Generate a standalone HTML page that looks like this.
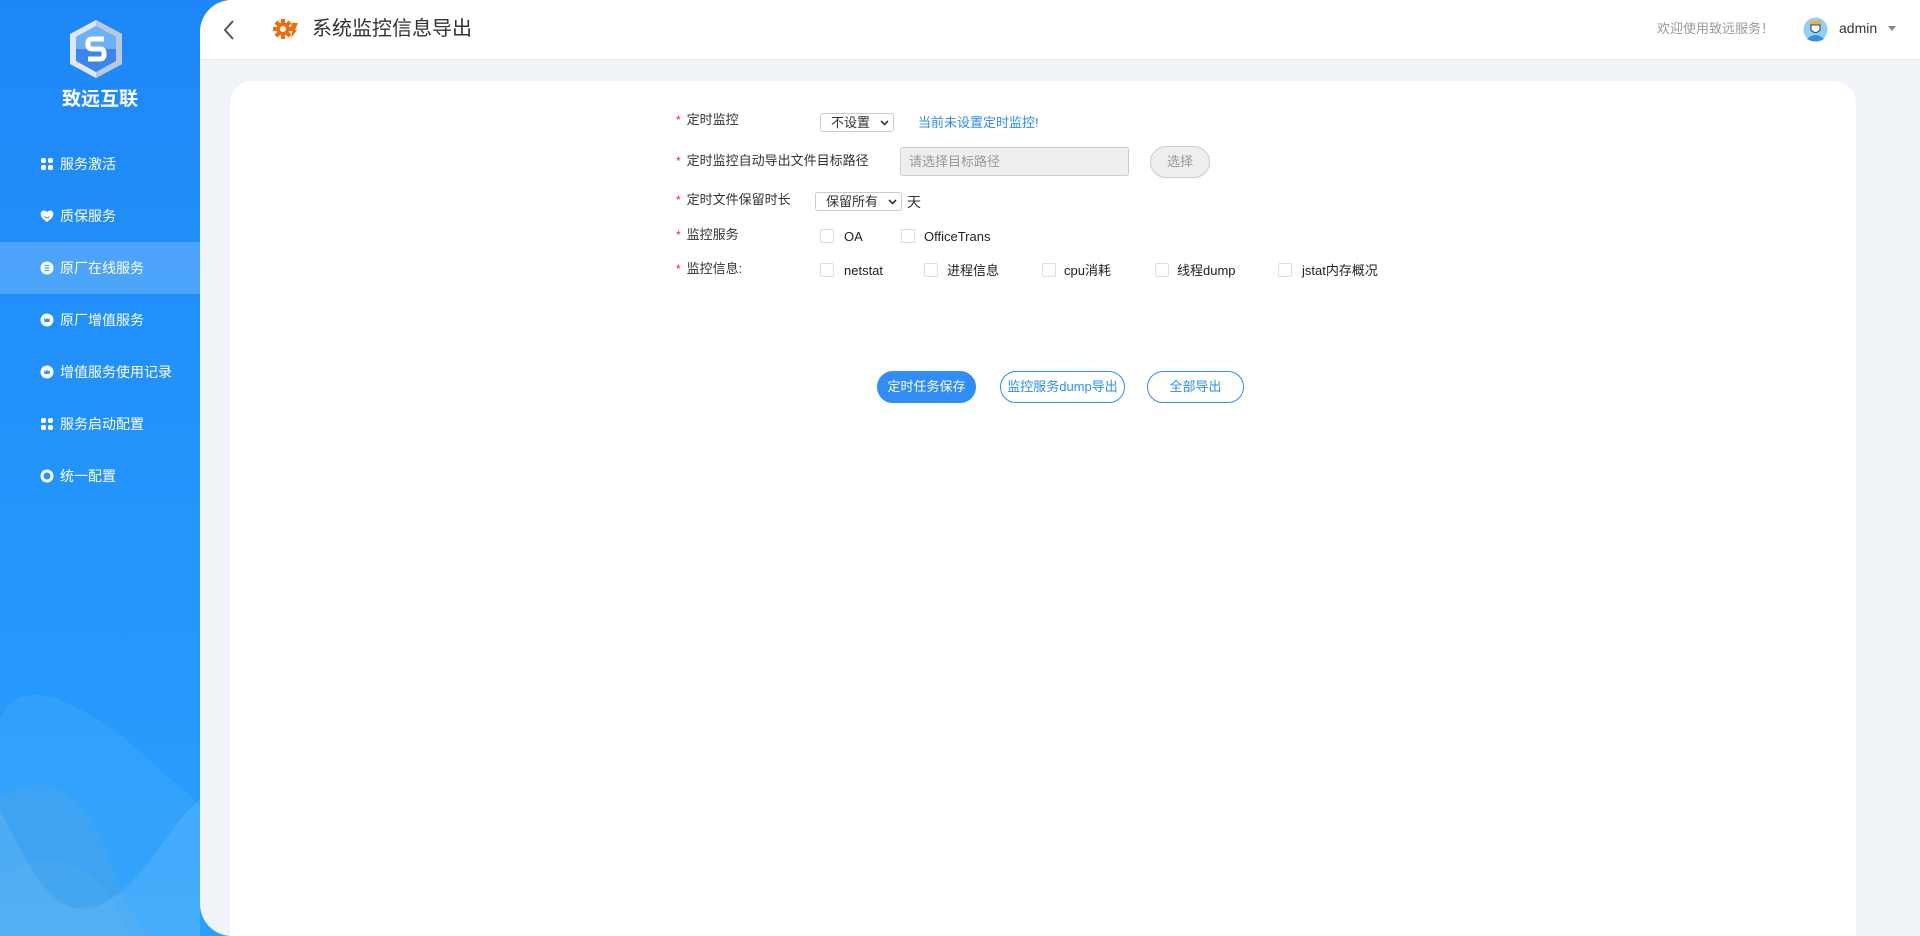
<!DOCTYPE html>
<html><head><meta charset="utf-8">
<style>
*{margin:0;padding:0;box-sizing:border-box}
body{width:1920px;height:936px;overflow:hidden;font-family:"Liberation Sans","Noto Sans CJK SC",sans-serif;background:linear-gradient(180deg,#1e87f7 0%,#2599fc 70%,#2aa0fb 100%);position:relative;color:#333}
.side{position:absolute;left:0;top:0;width:200px;height:936px}
.logo{position:absolute;left:66px;top:18px}
.brand{position:absolute;left:0;width:200px;top:84px;text-align:center;color:#fff;font-size:19px;font-weight:bold}
.item{position:absolute;left:0;width:200px;height:52px;line-height:52px;color:#fff;font-size:14px;padding-left:60px}
.item.active{background:rgba(255,255,255,0.2)}
.ic{position:absolute;left:40px;top:19px;width:14px;height:14px}
.main{position:absolute;left:200px;top:0;width:1720px;height:936px;background:#f0f3f7;border-radius:32px 0 0 32px;overflow:hidden}
.head{position:absolute;left:0;top:0;width:1720px;height:60px;background:#fff;border-bottom:1px solid #e6e9ee}
.card{position:absolute;left:30px;top:81px;width:1626px;height:880px;background:#fff;border-radius:22px}
.abs{position:absolute;white-space:nowrap;line-height:18px}
.lbl{font-size:13px;color:#333}
.lbl b{color:#f5222d;font-weight:normal;font-size:12px;margin-right:6px}
.sel{position:absolute;border:1px solid #ccc;border-radius:3px;font-size:13px;color:#333;background:#fff;padding-left:10px;line-height:17px}
.sel svg{position:absolute;right:4px;top:6px}
.cb{position:absolute;width:14px;height:14px;border:1px solid #dcdfe6;border-radius:2px;background:#fff}
.t{font-size:13px;color:#222}
.btn{position:absolute;height:32px;line-height:30px;border-radius:16px;font-size:13px;text-align:center;border:1px solid #2f8df5;color:#2f8df5;background:#fff}
</style></head><body>
<div class="side">
<svg class="logo" width="60" height="62" viewBox="0 0 60 62">
<polygon points="30,2 56,16 56,46 30,60 4,46 4,16" fill="#dfe7f2"/>
<polygon points="30,2 56,16 56,46 30,60" fill="#b9c8dc"/>
<polygon points="30,8 50,19 50,43 30,54 10,43 10,19" fill="#3a86ec"/>
<polygon points="30,8 50,19 50,31 10,31 10,19" fill="#6cb0f7"/>
<path d="M38,21 H26 Q22,21 22,25 V27 Q22,31 26,31 H34 Q38,31 38,35 V37 Q38,41 34,41 H22" stroke="#fff" stroke-width="5" fill="none"/>
</svg>
<div class="brand">致远互联</div>
<div class="item" style="top:138px"><svg class="ic" viewBox="0 0 14 14"><rect x="1" y="1" width="5" height="5" rx="2" fill="#fff"/><rect x="8" y="1" width="5" height="5" rx="2" fill="#fff"/><rect x="1" y="8" width="5" height="5" rx="2" fill="#fff"/><rect x="8" y="8" width="5" height="5" rx="2" fill="#fff"/></svg>服务激活</div>
<div class="item" style="top:190px"><svg class="ic" viewBox="0 0 14 14"><path d="M7,13 C1,9 0,6 1,3.5 C2,1 5,1 7,3 C9,1 12,1 13,3.5 C14,6 13,9 7,13Z" fill="#fff"/><path d="M4.5,7.5 q2.5,2.5 5,0" stroke="#2a93f8" stroke-width="1" fill="none"/></svg>质保服务</div>
<div class="item active" style="top:242px"><svg class="ic" viewBox="0 0 14 14"><circle cx="7" cy="7" r="6.5" fill="#fff"/><path d="M4.5,4.5h5M4.5,7h5M4.5,9.5h5" stroke="#4aa2f7" stroke-width="1.2"/></svg>原厂在线服务</div>
<div class="item" style="top:294px"><svg class="ic" viewBox="0 0 14 14"><circle cx="7" cy="7" r="6.5" fill="#fff"/><path d="M4.5,9h5l0.5,-4l-2,1.5l-1,-2l-1,2l-2,-1.5z" fill="#2a93f8"/></svg>原厂增值服务</div>
<div class="item" style="top:346px"><svg class="ic" viewBox="0 0 14 14"><circle cx="7" cy="7" r="6.5" fill="#fff"/><path d="M4.5,9h5l0.5,-4l-2,1.5l-1,-2l-1,2l-2,-1.5z" fill="#2a93f8"/></svg>增值服务使用记录</div>
<div class="item" style="top:398px"><svg class="ic" viewBox="0 0 14 14"><rect x="1" y="1" width="5" height="5" rx="2" fill="#fff"/><rect x="8" y="1" width="5" height="5" rx="2" fill="#fff"/><rect x="1" y="8" width="5" height="5" rx="2" fill="#fff"/><rect x="8" y="8" width="5" height="5" rx="2" fill="#fff"/></svg>服务启动配置</div>
<div class="item" style="top:450px"><svg class="ic" viewBox="0 0 14 14"><circle cx="7" cy="7" r="5" fill="none" stroke="#fff" stroke-width="3"/></svg>统一配置</div>
<svg style="position:absolute;left:0;top:680px" width="200" height="256" viewBox="0 0 200 256">
<path d="M0,40 C20,-10 80,20 150,80 C180,110 200,120 200,130 V256 H0Z" fill="#fff" opacity="0.05"/>
<path d="M0,120 C40,90 80,100 110,180 C130,240 150,256 150,256 H0Z" fill="#7ac" opacity="0.18"/>
<path d="M200,120 C170,140 150,200 100,225 C60,240 40,210 0,130 V256 H200Z" fill="#8cf" opacity="0.22"/>
<path d="M0,200 C50,160 100,180 130,256 H0Z" fill="#6bd" opacity="0.15"/>
</svg>
</div>
<div class="main">
<div class="head">
<svg class="abs" style="left:22px;top:19px" width="14" height="22" viewBox="0 0 14 22"><path d="M11,2 L3,11 L11,20" stroke="#555" stroke-width="2" fill="none"/></svg>
<svg class="abs" style="left:73px;top:18px" width="26" height="22" viewBox="0 0 26 22"><g fill="#f26b0c"><circle cx="10" cy="11" r="6.5"/><rect x="8" y="1" width="4" height="20"/><rect x="0" y="9" width="20" height="4"/><rect x="8" y="1" width="4" height="20" transform="rotate(45 10 11)"/><rect x="8" y="1" width="4" height="20" transform="rotate(-45 10 11)"/></g><circle cx="10" cy="11" r="3" fill="#fff"/><path d="M19,5 L25,5 L22,12 L24,12 L18,20 L19.5,13 L17,13Z" fill="#f26b0c"/></svg>
<div class="abs" style="left:112px;top:17px;font-size:20px;line-height:24px;color:#333">系统监控信息导出</div>
<div class="abs" style="left:1457px;top:20px;font-size:13px;color:#999">欢迎使用致远服务！</div>
<svg class="abs" style="left:1603px;top:17px" width="25" height="25" viewBox="0 0 25 25"><circle cx="12.5" cy="12.5" r="12" fill="#8fd0f6"/><rect x="7" y="4" width="11" height="4" fill="#f5b031"/><path d="M8,8 h9 v5 q-4.5,5 -9,0z" fill="#fff" stroke="#22456b" stroke-width="1"/><path d="M4,22 q8.5,-8 17,0 q-8.5,5 -17,0z" fill="#3b8de0"/></svg>
<div class="abs" style="left:1639px;top:19px;font-size:14px;color:#333">admin</div>
<div class="abs" style="left:1688px;top:26px;width:0;height:0;border-left:4px solid transparent;border-right:4px solid transparent;border-top:5px solid #888"></div>
</div>
<div class="card">
<div style="position:absolute;left:-230px;top:-81px">
<div class="abs lbl" style="left:676px;top:111px"><b>*</b>定时监控</div>
<div class="sel" style="left:820px;top:113px;width:74px;height:19px">不设置<svg width="9" height="6" viewBox="0 0 9 6"><path d="M1,1 L4.5,4.5 L8,1" stroke="#333" stroke-width="1.6" fill="none"/></svg></div>
<div class="abs" style="left:918px;top:114px;font-size:13px;color:#2f8df5">当前未设置定时监控!</div>
<div class="abs lbl" style="left:676px;top:152px"><b>*</b>定时监控自动导出文件目标路径</div>
<div class="abs" style="left:900px;top:147px;width:229px;height:29px;background:#eee;border:1px solid #ccc;border-radius:3px;font-size:13px;color:#999;padding:5px 0 0 8px">请选择目标路径</div>
<div class="abs" style="left:1150px;top:146px;width:60px;height:32px;border:1px solid #ccc;border-radius:16px;background:#eee;font-size:13px;color:#999;text-align:center;line-height:30px">选择</div>
<div class="abs lbl" style="left:676px;top:191px"><b>*</b>定时文件保留时长</div>
<div class="sel" style="left:815px;top:192px;width:87px;height:19px">保留所有<svg width="9" height="6" viewBox="0 0 9 6"><path d="M1,1 L4.5,4.5 L8,1" stroke="#333" stroke-width="1.6" fill="none"/></svg></div>
<div class="abs" style="left:907px;top:193px;font-size:14px;color:#333">天</div>
<div class="abs lbl" style="left:676px;top:226px"><b>*</b>监控服务</div>
<div class="cb" style="left:820px;top:229px"></div><div class="abs t" style="left:844px;top:228px">OA</div>
<div class="cb" style="left:901px;top:229px"></div><div class="abs t" style="left:924px;top:228px">OfficeTrans</div>
<div class="abs lbl" style="left:676px;top:260px"><b>*</b>监控信息:</div>
<div class="cb" style="left:820px;top:263px"></div><div class="abs t" style="left:844px;top:262px">netstat</div>
<div class="cb" style="left:924px;top:263px"></div><div class="abs t" style="left:947px;top:262px">进程信息</div>
<div class="cb" style="left:1042px;top:263px"></div><div class="abs t" style="left:1064px;top:262px">cpu消耗</div>
<div class="cb" style="left:1155px;top:263px"></div><div class="abs t" style="left:1177px;top:262px">线程dump</div>
<div class="cb" style="left:1278px;top:263px"></div><div class="abs t" style="left:1302px;top:262px">jstat内存概况</div>
<div class="btn" style="left:877px;top:371px;width:99px;background:#2f8df5;color:#fff">定时任务保存</div>
<div class="btn" style="left:1000px;top:371px;width:125px">监控服务dump导出</div>
<div class="btn" style="left:1147px;top:371px;width:97px">全部导出</div>
</div>
</div>
</div>
</body></html>
